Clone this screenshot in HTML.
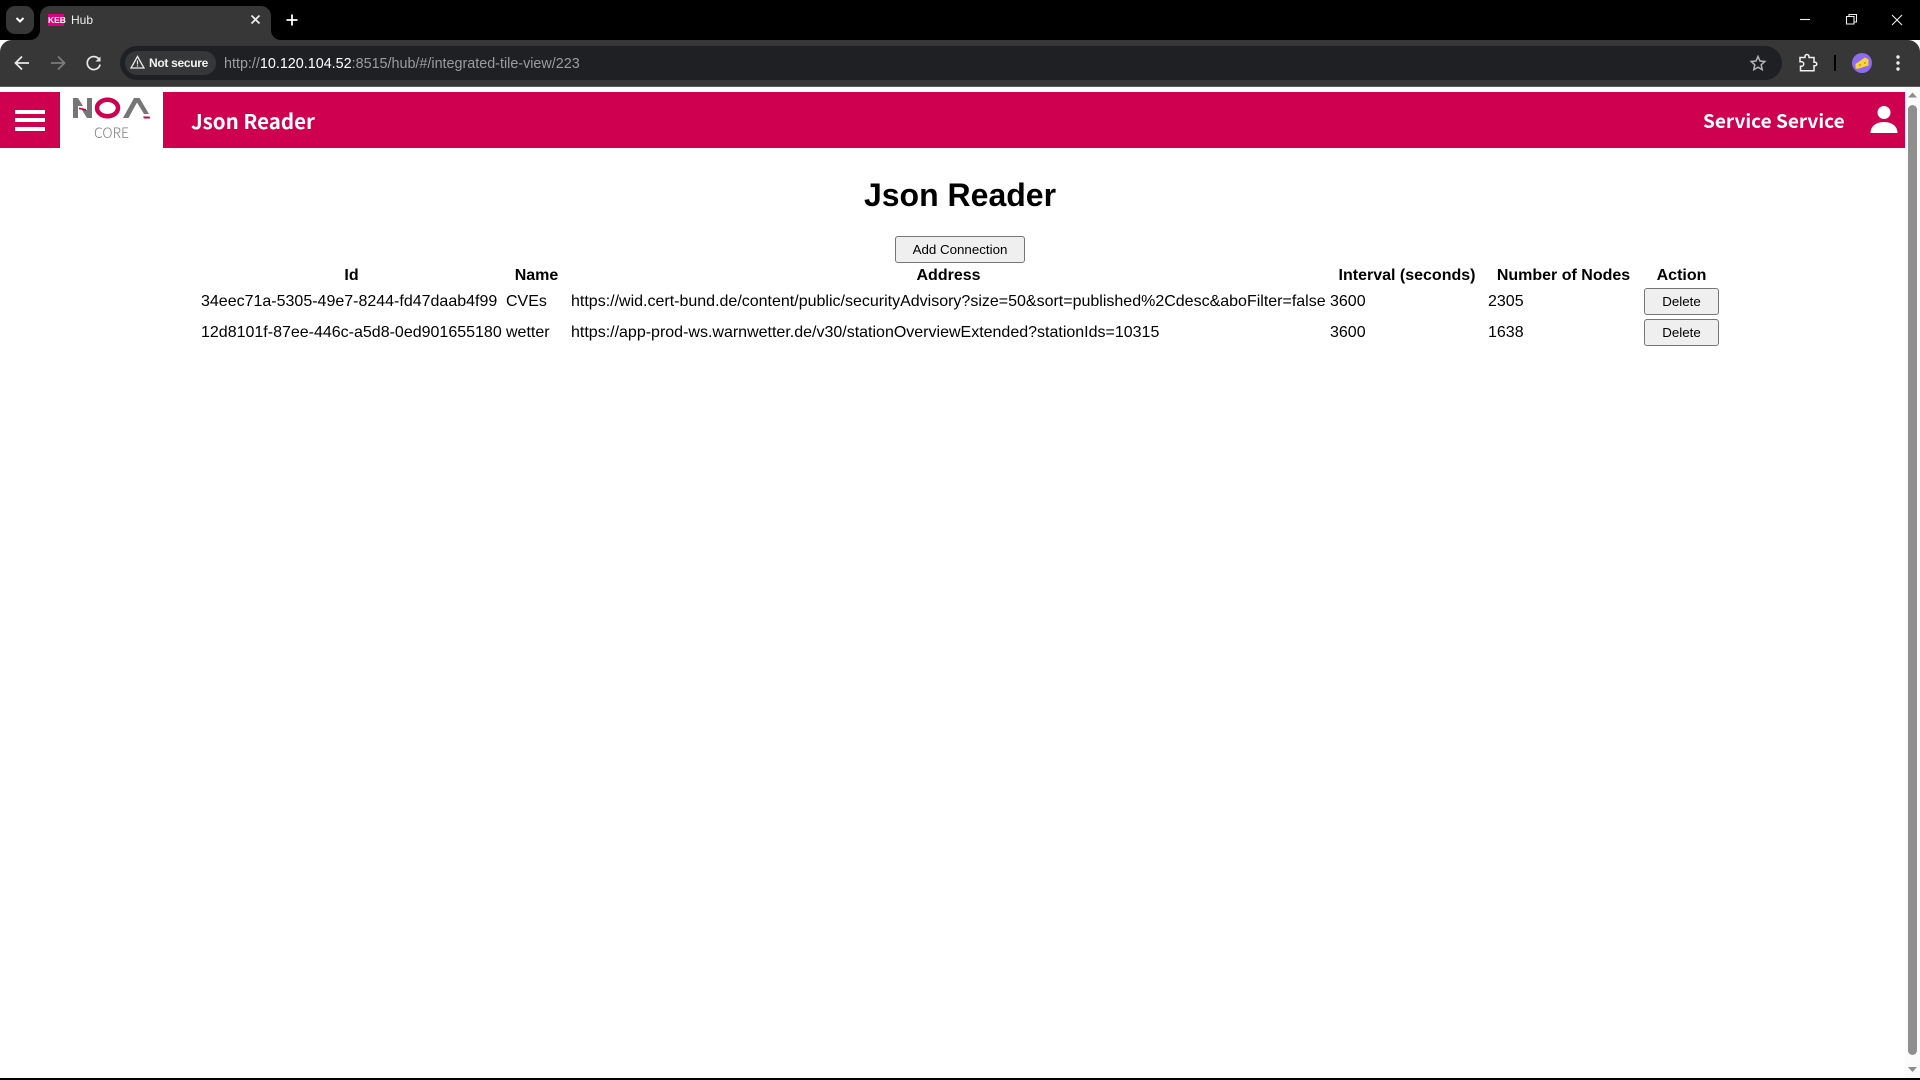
<!DOCTYPE html>
<html lang="en"><head><meta charset="utf-8"><title>Hub</title>
<style>
html,body{margin:0;padding:0;width:1920px;height:1080px;overflow:hidden;background:#fff;font-family:"Liberation Sans",Arial,sans-serif;color:#000}
.a{position:absolute}
svg{position:absolute;overflow:visible}
.ui{font-family:"Liberation Sans",sans-serif;white-space:nowrap}
.hd{font-family:"Noto Sans CJK JP","Liberation Sans",sans-serif;color:#fff;font-weight:bold;white-space:nowrap;line-height:30px}
h1{position:absolute;left:0;width:1920px;top:177px;margin:0;text-align:center;font-size:32px;line-height:37px;font-weight:bold}
button{font-family:"Liberation Sans",Arial,sans-serif;font-size:13.333px;line-height:15px;padding:5px 0;border:1px solid #767676;border-radius:3px;background:#efefef;color:#000;display:block;box-sizing:border-box;text-align:center}
table{position:absolute;top:264px;left:198px;width:1521px;table-layout:fixed;border-collapse:separate;border-spacing:2px;font-size:16px}
th,td{padding:1px;line-height:18px;white-space:nowrap}
th{text-align:center;font-weight:bold}
td{text-align:left}
td.b{vertical-align:middle}
td.b button{width:75px;margin-left:1px}
</style></head><body>

<!-- browser chrome -->
<div class="a" style="left:0;top:0;width:1920px;height:40px;background:#000"></div>
<div class="a" style="left:0;top:40px;width:1920px;height:46px;background:#373737;border-radius:12px 12px 0 0"></div>
<div class="a" style="left:0;top:86px;width:1920px;height:1px;background:#5c5c5c"></div>
<div class="a" style="left:6px;top:6px;width:28px;height:28px;background:#373737;border-radius:9px"></div>
<svg style="left:0;top:0" width="40" height="40"><path d="M16.500 18l3.500 3.500 3.500-3.500" fill="none" stroke="#fff" stroke-width="2"/></svg>
<div class="a" style="left:40px;top:6px;width:231px;height:34px;background:#373737;border-radius:10px 10px 0 0"></div>
<svg style="left:30px;top:30px" width="260" height="12"><path d="M0 10a10 10 0 0 0 10-10v10zM241 0a10 10 0 0 0 10 10h-10z" fill="#373737"/></svg>
<div class="a ui" style="left:48px;top:14px;width:16px;height:12px;background:#e0007c;color:#fff;font-size:8.500px;font-weight:bold;line-height:12px;text-align:center">KEB</div>
<div class="a ui" style="left:71px;top:12px;font-size:12px;line-height:16px;color:#eee">Hub</div>
<svg style="left:250px;top:14px" width="12" height="12"><path d="M1.500 1.500l8 8M9.500 1.500l-8 8" stroke="#eee" stroke-width="1.700" fill="none"/></svg>
<svg style="left:285px;top:13px" width="14" height="14"><path d="M7 1.500v11M1.500 7h11" stroke="#fff" stroke-width="1.800" fill="none"/></svg>

<svg style="left:0;top:40px" width="120" height="46">
<path d="M29 23H16M22 16.500L15.500 23l6.500 6.500" fill="none" stroke="#e8e8e8" stroke-width="1.800"/>
<path d="M51 23h13M58 16.500l6.500 6.500-6.500 6.500" fill="none" stroke="#7b7b7b" stroke-width="1.800"/>
<path d="M99.500 20a6.500 6.500 0 1 0 .6 4.500" fill="none" stroke="#e8e8e8" stroke-width="1.700"/><path d="M100.500 16.500v5h-5z" fill="#e8e8e8"/>
</svg>

<div class="a" style="left:120px;top:46px;width:1662px;height:34px;background:#1f2023;border-radius:17px"></div>
<div class="a" style="left:125px;top:51px;width:91px;height:24px;background:#363739;border-radius:12px"></div>
<svg style="left:130px;top:55px" width="15" height="15"><path d="M7.500 1.500L14 13H1z" fill="none" stroke="#e8e8e8" stroke-width="1.300"/><path d="M7.500 5.500v4M7.500 10.300v1.300" stroke="#e8e8e8" stroke-width="1.200"/></svg>
<div class="a ui" style="left:149px;top:55px;font-size:12px;line-height:16px;font-weight:bold;color:#f2f2f2;letter-spacing:-.3px">Not secure</div>
<div class="a ui" style="left:224px;top:55px;font-size:14.350px;line-height:18px;color:#9a9c9f">http://<span style="color:#fff">10.120.104.52</span>:8515/hub/#/integrated-tile-view/223</div>

<svg style="left:1748px;top:53px" width="20" height="20"><path d="M10 3.500l2 4.500 4.800.5-3.600 3.300 1 4.800L10 14.200l-4.200 2.400 1-4.800-3.600-3.300 4.800-.5z" fill="none" stroke="#b4b4b4" stroke-width="1.500"/></svg>
<svg style="left:1798px;top:53px" width="20" height="20"><path d="M2 4.500h5V3.500a2 2 0 0 1 4 0v1h5v4.700h1a1.800 1.800 0 0 1 0 3.600h-1v5H2.500v-4.500h1a2.200 2.200 0 0 0 0-4.500h-1.500z" fill="none" stroke="#f0f0f0" stroke-width="1.500"/></svg>
<div class="a" style="left:1834px;top:55px;width:2px;height:16px;background:#000"></div>
<div class="a" style="left:1852px;top:53px;width:20px;height:20px;border-radius:50%;background:#8d6cf0"></div>
<svg style="left:1852px;top:53px" width="20" height="20"><path d="M3.500 11L13 4.500l3.500 2v6L5 16l-1.500-1z" fill="#f8d53a"/><circle cx="8" cy="12" r="1" fill="#c79a1c"/><circle cx="13" cy="10" r="1" fill="#c79a1c"/></svg>
<svg style="left:1892px;top:53px" width="12" height="20"><circle cx="6" cy="4" r="1.700" fill="#eee"/><circle cx="6" cy="10" r="1.700" fill="#eee"/><circle cx="6" cy="16" r="1.700" fill="#eee"/></svg>

<svg style="left:1795px;top:10px" width="120" height="20">
<path d="M5 9.500h10" stroke="#eee" stroke-width="1.100"/>
<path d="M51.500 6.500h7.500v7.500h-7.500zM54 6.500V4.500h7.500V12H59" fill="none" stroke="#eee" stroke-width="1.100"/>
<path d="M97 5l10 10M107 5L97 15" stroke="#eee" stroke-width="1.100"/>
</svg>

<!-- app header -->
<div class="a" style="left:0;top:92px;width:60px;height:56px;background:#cf0050"></div>
<div class="a" style="left:163px;top:92px;width:1742px;height:56px;background:#cf0050"></div>
<div class="a" style="left:15px;top:110px;width:30px;height:4px;background:#fff"></div>
<div class="a" style="left:15px;top:118px;width:30px;height:4px;background:#fff"></div>
<div class="a" style="left:15px;top:127px;width:30px;height:4px;background:#fff"></div>

<svg style="left:66px;top:93px" width="90" height="56">
<path d="M7 5h5v20H7zM21 5h5v20h-5z" fill="#767676"/>
<path d="M12 5l5 8h-5zM21 17v8l-5-8z" fill="#767676"/>
<path d="M13 14.500l7 1.500v1.800l-7-1.500z" fill="#cf0050"/>
<ellipse cx="41.500" cy="15" rx="10.500" ry="8.200" fill="none" stroke="#cf0050" stroke-width="4.500"/>
<path d="M57 25L68 5h5.500l9.500 16h-5L71 9.500 62.500 25z" fill="#767676"/>
<path d="M77 23.500h6.500l.7 2H78z" fill="#cf0050"/>
</svg>
<div class="a" style="left:60px;top:124px;width:103px;text-align:center;font-family:'Noto Sans CJK JP','Liberation Sans',sans-serif;font-size:14px;line-height:18px;color:#7d7d7d;font-weight:300">CORE</div>

<div class="a hd" style="left:191px;top:105px;font-size:20.500px">Json Reader</div>
<div class="a hd" style="left:1703px;top:106px;font-size:19px">Service Service</div>
<svg style="left:1870px;top:104px" width="28" height="30"><circle cx="14" cy="8.500" r="6.500" fill="#fff"/><path d="M0.500 29c0-7 6-11 13.500-11s13.500 4 13.500 11z" fill="#fff"/></svg>

<!-- scrollbar -->
<div class="a" style="left:1905px;top:87px;width:15px;height:991px;background:#fbfbfb"></div>
<svg style="left:1905px;top:87px" width="15" height="991"><path d="M7.500 5.500L12 10.500H3z" fill="#8c8c8c"/><path d="M7.500 985L12 980H3z" fill="#8c8c8c"/></svg>
<div class="a" style="left:1908px;top:105px;width:9px;height:950px;background:#8f8f8f;border-radius:5px"></div>
<div class="a" style="left:0;top:1078px;width:1920px;height:2px;background:#000"></div>

<!-- content -->
<h1>Json Reader</h1>
<button class="a" style="left:895px;top:236px;width:130px;height:27px">Add Connection</button>

<table>
<colgroup><col style="width:303px"><col style="width:63px"><col style="width:757px"><col style="width:156px"><col style="width:153px"><col style="width:79px"></colgroup>
<tr><th>Id</th><th>Name</th><th>Address</th><th>Interval (seconds)</th><th>Number of Nodes</th><th>Action</th></tr>
<tr style="position:relative;top:-1px"><td>34eec71a-5305-49e7-8244-fd47daab4f99</td><td>CVEs</td><td>https://wid.cert-bund.de/content/public/securityAdvisory?size=50&amp;sort=published%2Cdesc&amp;aboFilter=false</td><td>3600</td><td>2305</td><td class="b"><button>Delete</button></td></tr>
<tr style="position:relative;top:-1px"><td>12d8101f-87ee-446c-a5d8-0ed901655180</td><td>wetter</td><td>https://app-prod-ws.warnwetter.de/v30/stationOverviewExtended?stationIds=10315</td><td>3600</td><td>1638</td><td class="b"><button>Delete</button></td></tr>
</table>
</body></html>
